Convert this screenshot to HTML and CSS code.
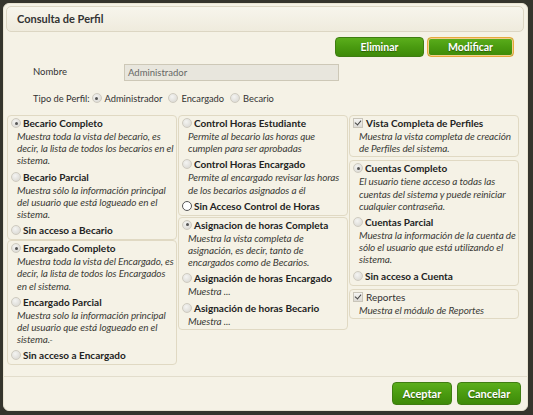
FILE: index.html
```html
<!DOCTYPE html>
<html lang="es">
<head>
<meta charset="utf-8">
<title>Consulta de Perfil</title>
<link rel="stylesheet" href="styles.css">
</head>
<body>
<div class="backdrop">
  <div class="dialog">
    <div class="titlebar">Consulta de Perfil</div>
    <div class="toolbar">
      <button class="btn btn-elim">Eliminar</button>
      <button class="btn btn-mod focus">Modificar</button>
    </div>
    <div class="field-row">
      <span class="lbl-nombre">Nombre</span>
      <span class="input">Administrador</span>
    </div>
    <div class="tipo-row">
      <span class="tipo-lbl">Tipo de Perfil:</span>
      <span class="radio checked"></span><span class="tipo-opt">Administrador</span>
      <span class="radio"></span><span class="tipo-opt">Encargado</span>
      <span class="radio"></span><span class="tipo-opt">Becario</span>
    </div>
    <div class="cols">
      <div class="col">
        <div class="box">
          <div class="opt"><span class="radio checked"></span><b>Becario Completo</b></div>
          <div class="desc">Muestra toda la vista del becario, es decir, la lista de todos los becarios en el sistema.</div>
          <div class="opt"><span class="radio"></span><b>Becario Parcial</b></div>
          <div class="desc">Muestra sólo la información principal del usuario que está logueado en el sistema.</div>
          <div class="opt"><span class="radio"></span><b>Sin acceso a Becario</b></div>
        </div>
        <div class="box">
          <div class="opt"><span class="radio checked"></span><b>Encargado Completo</b></div>
          <div class="desc">Muestra toda la vista del Encargado, es decir, la lista de todos los Encargados en el sistema.</div>
          <div class="opt"><span class="radio"></span><b>Encargado Parcial</b></div>
          <div class="desc">Muestra solo la información principal del usuario que está logueado en el sistema.-</div>
          <div class="opt"><span class="radio"></span><b>Sin acceso a Encargado</b></div>
        </div>
      </div>
      <div class="col">
        <div class="box">
          <div class="opt"><span class="radio"></span><b>Control Horas Estudiante</b></div>
          <div class="desc">Permite al becario las horas que cumplen para ser aprobadas</div>
          <div class="opt"><span class="radio"></span><b>Control Horas Encargado</b></div>
          <div class="desc">Permite al encargado revisar las horas de los becarios asignados a él</div>
          <div class="opt"><span class="radio plain"></span><b>Sin Acceso Control de Horas</b></div>
        </div>
        <div class="box">
          <div class="opt"><span class="radio checked"></span><b>Asignacion de horas Completa</b></div>
          <div class="desc">Muestra la vista completa de asignación, es decir, tanto de encargados como de Becarios.</div>
          <div class="opt"><span class="radio"></span><b>Asignación de horas Encargado</b></div>
          <div class="desc">Muestra ...</div>
          <div class="opt"><span class="radio"></span><b>Asignación de horas Becario</b></div>
          <div class="desc">Muestra ...</div>
        </div>
      </div>
      <div class="col">
        <div class="box">
          <div class="opt"><span class="check"></span><b>Vista Completa de Perfiles</b></div>
          <div class="desc">Muestra la vista completa de creación de Perfiles del sistema.</div>
        </div>
        <div class="box">
          <div class="opt"><span class="radio checked"></span><b>Cuentas Completo</b></div>
          <div class="desc">El usuario tiene acceso a todas las cuentas del sistema y puede reiniciar cualquier contraseña.</div>
          <div class="opt"><span class="radio"></span><b>Cuentas Parcial</b></div>
          <div class="desc">Muestra la información de la cuenta de sólo el usuario que está utilizando el sistema.</div>
          <div class="opt"><span class="radio"></span><b>Sin acceso a Cuenta</b></div>
        </div>
        <div class="box">
          <div class="opt"><span class="check"></span><span class="normal">Reportes</span></div>
          <div class="desc">Muestra el módulo de Reportes</div>
        </div>
      </div>
    </div>
    <div class="footer">
      <button class="btn btn-acep">Aceptar</button>
      <button class="btn btn-canc">Cancelar</button>
    </div>
  </div>
</div>
</body>
</html>
```
FILE: styles.css
```css
html, body {
  margin: 0;
  padding: 0;
}
body {
  width: 533px;
  height: 415px;
  background: #35352d;
  font-family: Lato, "Open Sans", sans-serif;
  color: #2b2b25;
  overflow: hidden;
}
.backdrop {
  padding: 3px 0 0 3px;
}
.dialog {
  width: 523px;
  height: 406px;
  background: #f5f2e6;
  border: 1px solid #e9e4d2;
  border-radius: 6px;
  display: flex;
  flex-direction: column;
}
.titlebar {
  margin: 2px 3px 0 2px;
  height: 24px;
  line-height: 24px;
  padding-left: 10px;
  background: linear-gradient(#f7f5ec, #efebdd);
  border: 1px solid #dcd6c3;
  border-radius: 5px;
  font-weight: bold;
  font-size: 11px;
  color: #333;
}
.toolbar {
  display: flex;
  justify-content: flex-end;
  gap: 3px;
  margin-top: 5px;
  padding-right: 13px;
}
.btn {
  font-family: Lato, "Open Sans", sans-serif;
  font-weight: bold;
  font-size: 10.5px;
  color: #fff;
  text-shadow: 0 1px 1px #2c5a08;
  background: linear-gradient(#5bae1c, #4a9b10 50%, #3e8a09);
  border: 1px solid #3f7d12;
  border-radius: 4px;
  padding: 0;
  cursor: pointer;
}
.btn-elim { width: 89px; height: 20px; }
.btn-mod { width: 87px; height: 20px; }
.btn.focus { border-color: #e6a83c; box-shadow: 0 0 0 1px #f2cf8a inset; }
.field-row {
  display: flex;
  align-items: center;
  margin-top: 7px;
  padding-left: 29px;
  font-size: 9.5px;
}
.lbl-nombre {
  width: 91px;
  color: #333;
  position: relative;
  top: -1px;
}
.input {
  width: 210px;
  height: 15px;
  line-height: 15px;
  padding-left: 3px;
  background: #e8e6dd;
  border: 1px solid #cdc8b7;
  color: #666;
  font-size: 9.5px;
}
.tipo-row {
  display: flex;
  align-items: center;
  height: 16px;
  margin-top: 9px;
  padding-left: 29px;
  font-size: 9.3px;
  color: #333;
}
.tipo-lbl { margin-right: 2px; }
.tipo-opt { margin: 0 6px 0 1px; }
.cols {
  display: grid;
  grid-template-columns: 170px 170px 170px;
  column-gap: 1px;
  margin-top: 9px;
  padding-left: 3px;
  align-items: start;
}
.col {
  display: flex;
  flex-direction: column;
  gap: 0;
}
.col:nth-child(2) { gap: 1px; }
.col:nth-child(3) { gap: 3px; }
.box {
  border: 1px solid #e0d9c3;
  border-radius: 4px;
  padding: 0 0 2px 3px;
  font-size: 10px;
}
.opt {
  display: flex;
  align-items: center;
  height: 14px;
  white-space: nowrap;
}
.opt b {
  font-weight: bold;
  color: #222;
}
.opt .normal { color: #333; }
.desc {
  font-style: italic;
  color: #3d3d38;
  line-height: 12.2px;
  letter-spacing: -0.12px;
  padding-left: 6px;
  margin-bottom: 3px;
}
.desc:last-child { margin-bottom: 0; }
.radio {
  flex: none;
  width: 8px;
  height: 8px;
  border-radius: 50%;
  border: 1px solid #cfcbc0;
  background: radial-gradient(circle at 40% 35%, #f4f4f2, #d6d4ce);
  margin-right: 2px;
  position: relative;
}
.radio.checked::after {
  content: "";
  position: absolute;
  left: 2.5px;
  top: 2.5px;
  width: 3px;
  height: 3px;
  border-radius: 50%;
  background: #555;
}
.radio.plain {
  background: #fff;
  border-color: #555;
}
.check {
  flex: none;
  width: 8px;
  height: 8px;
  border: 1px solid #c9c5b9;
  background: linear-gradient(#f5f5f3, #dcdad4);
  margin-right: 3px;
  position: relative;
}
.check::after {
  content: "";
  position: absolute;
  left: 2px;
  top: 0;
  width: 3px;
  height: 5px;
  border: solid #444;
  border-width: 0 1.5px 1.5px 0;
  transform: rotate(40deg);
}
.footer {
  margin-top: auto;
  border-top: 1px solid #e2ddcc;
  display: flex;
  justify-content: flex-end;
  gap: 5px;
  padding: 5px 6px 5px 0;
}
.btn-acep { width: 60px; height: 23px; font-size: 11px; }
.btn-canc { width: 64px; height: 23px; font-size: 11px; }
```
